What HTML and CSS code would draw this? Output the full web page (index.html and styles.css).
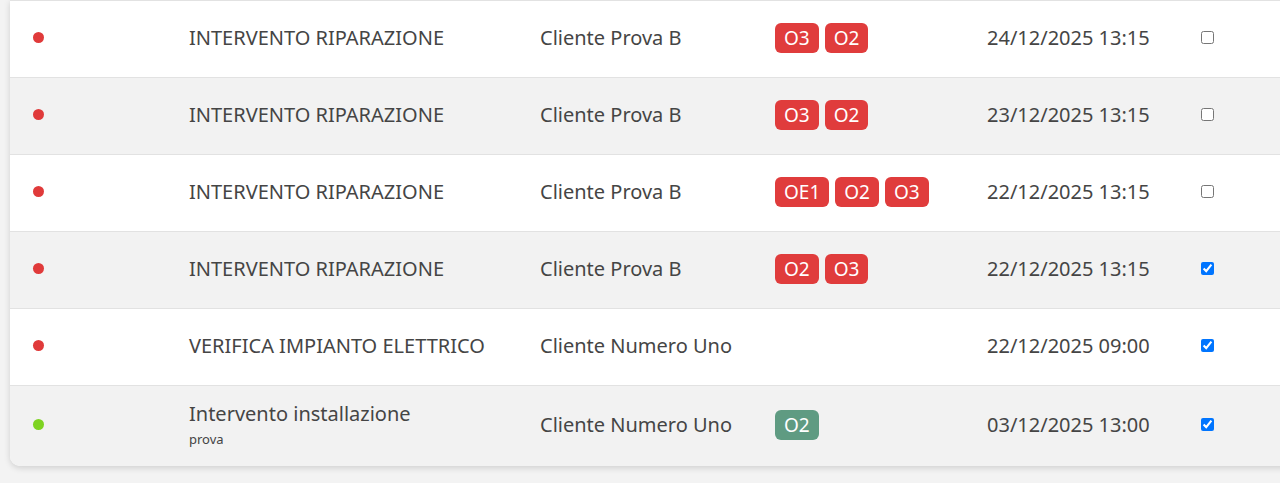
FILE: index.html
```html
<!DOCTYPE html>
<html lang="it">
<head>
<meta charset="utf-8">
<link rel="stylesheet" href="styles.css">
</head>
<body>
<div class="page">
  <div class="card">
    <div class="row">
      <div class="c-dot"><span class="dot red"></span></div>
      <div class="c-title">INTERVENTO RIPARAZIONE</div>
      <div class="c-client">Cliente Prova B</div>
      <div class="c-badges"><span class="badge">O3</span><span class="badge">O2</span></div>
      <div class="c-date">24/12/2025 13:15</div>
      <div class="c-check"><input type="checkbox"></div>
    </div>
    <div class="row alt">
      <div class="c-dot"><span class="dot red"></span></div>
      <div class="c-title">INTERVENTO RIPARAZIONE</div>
      <div class="c-client">Cliente Prova B</div>
      <div class="c-badges"><span class="badge">O3</span><span class="badge">O2</span></div>
      <div class="c-date">23/12/2025 13:15</div>
      <div class="c-check"><input type="checkbox"></div>
    </div>
    <div class="row">
      <div class="c-dot"><span class="dot red"></span></div>
      <div class="c-title">INTERVENTO RIPARAZIONE</div>
      <div class="c-client">Cliente Prova B</div>
      <div class="c-badges"><span class="badge">OE1</span><span class="badge">O2</span><span class="badge">O3</span></div>
      <div class="c-date">22/12/2025 13:15</div>
      <div class="c-check"><input type="checkbox"></div>
    </div>
    <div class="row alt">
      <div class="c-dot"><span class="dot red"></span></div>
      <div class="c-title">INTERVENTO RIPARAZIONE</div>
      <div class="c-client">Cliente Prova B</div>
      <div class="c-badges"><span class="badge">O2</span><span class="badge">O3</span></div>
      <div class="c-date">22/12/2025 13:15</div>
      <div class="c-check"><input type="checkbox" checked></div>
    </div>
    <div class="row">
      <div class="c-dot"><span class="dot red"></span></div>
      <div class="c-title">VERIFICA IMPIANTO ELETTRICO</div>
      <div class="c-client">Cliente Numero Uno</div>
      <div class="c-badges"></div>
      <div class="c-date">22/12/2025 09:00</div>
      <div class="c-check"><input type="checkbox" checked></div>
    </div>
    <div class="row alt last">
      <div class="c-dot"><span class="dot green"></span></div>
      <div class="c-title"><div>Intervento installazione</div><div class="sub">prova</div></div>
      <div class="c-client">Cliente Numero Uno</div>
      <div class="c-badges"><span class="badge done">O2</span></div>
      <div class="c-date">03/12/2025 13:00</div>
      <div class="c-check"><input type="checkbox" checked></div>
    </div>
  </div>
</div>
</body>
</html>
```
FILE: styles.css
```css
html, body {
  margin: 0;
  padding: 0;
  background: #f3f3f3;
}
body {
  font-family: "Noto Sans", "Open Sans", sans-serif;
  color: #454545;
  font-size: 20px;
}
.page {
  padding-left: 10px;
  padding-bottom: 20px;
}
.card {
  background: #fff;
  border-radius: 0 0 10px 10px;
  box-shadow: 0 2px 6px rgba(0,0,0,0.15);
  overflow: hidden;
  width: 1290px;
}
.row {
  display: grid;
  grid-template-columns: 169px 351px 235px 212px 214px 1fr;
  align-items: center;
  min-height: 73px;
  padding-bottom: 3px;
  border-top: 1px solid #e2e2e2;
}
.row.alt { background: #f2f2f2; }
.row.last { min-height: 77px; }
.c-dot { padding-left: 23px; display: flex; align-items: center; }
.dot {
  width: 11px;
  height: 11px;
  border-radius: 50%;
  display: block;
}
.dot.red { background: #e03a3a; }
.dot.green { background: #7ed321; }
.c-title, .c-client, .c-badges, .c-date, .c-check { padding-left: 10px; }
.c-title { line-height: 1.25; }
.sub { font-size: 13px; color: #444; margin-top: 5px; }
.c-badges { display: flex; gap: 6px; }
.badge {
  background: #e03c3c;
  color: #fff;
  border-radius: 6px;
  padding: 0 9px;
  line-height: 30px;
  font-size: 19px;
}
.badge.done { background: #5f9b82; }
.c-check { display: flex; align-items: center; }
.c-check input { margin: 0; width: 13px; height: 13px; }
```
